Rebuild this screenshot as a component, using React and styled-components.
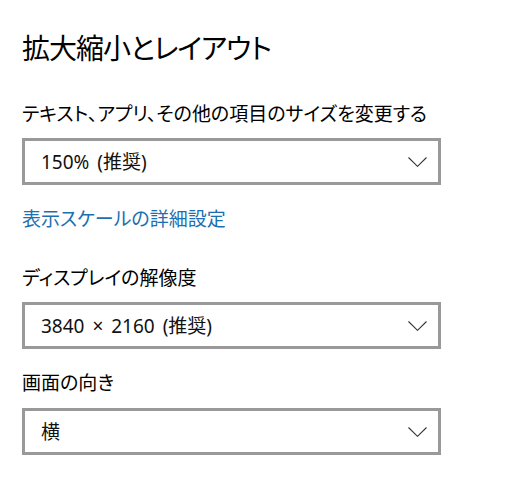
import React from "react";
import styled, { createGlobalStyle } from "styled-components";

const GlobalStyle = createGlobalStyle`
  html, body {
    margin: 0;
    padding: 0;
    background: #ffffff;
  }
  body {
    font-family: "Noto Sans", "Noto Sans CJK JP", sans-serif;
    font-feature-settings: "palt";
    color: #000000;
  }
`;

const Page = styled.div`
  display: flex;
  flex-direction: column;
  align-items: flex-start;
  padding: 30px 0 0 22px;
  width: 527px;
  height: 502px;
  box-sizing: border-box;
`;

const Title = styled.h1`
  margin: 0 0 36px;
  font-size: 28px;
  font-weight: 400;
  line-height: 36px;
  letter-spacing: -1px;
`;

const Label = styled.div`
  font-size: 19px;
  line-height: 24px;
  margin-bottom: ${p => p.$gap}px;
`;

const Link = styled.a`
  display: block;
  font-size: 19px;
  line-height: 24px;
  color: #1c6fb0;
  text-decoration: none;
  cursor: pointer;
  margin: 22px 0 35px;
`;

const Select = styled.div`
  display: flex;
  align-items: center;
  justify-content: space-between;
  box-sizing: border-box;
  width: 419px;
  height: 47px;
  border: 3px solid #999999;
  padding: 0 11px 0 16px;
  margin-bottom: ${p => p.$gap || 0}px;
`;

const Value = styled.span`
  font-size: 19px;
  line-height: 24px;
  word-spacing: 3px;
  color: #111111;
`;

const Chevron = () => (
  <svg width="19" height="10" viewBox="0 0 19 10" fill="none">
    <path d="M0.5 0.5 L9.5 9.3 L18.5 0.5" stroke="#333" strokeWidth="1.1" />
  </svg>
);

function Dropdown({ value, gap }) {
  return (
    <Select $gap={gap}>
      <Value>{value}</Value>
      <Chevron />
    </Select>
  );
}

export default function App() {
  return (
    <>
      <GlobalStyle />
      <Page>
        <Title>拡大縮小とレイアウト</Title>
        <Label $gap={12}>テキスト、アプリ、その他の項目のサイズを変更する</Label>
        <Dropdown value="150% (推奨)" />
        <Link>表示スケールの詳細設定</Link>
        <Label $gap={12}>ディスプレイの解像度</Label>
        <Dropdown value="3840 × 2160 (推奨)" gap={22} />
        <Label $gap={13}>画面の向き</Label>
        <Dropdown value="横" />
      </Page>
    </>
  );
}
